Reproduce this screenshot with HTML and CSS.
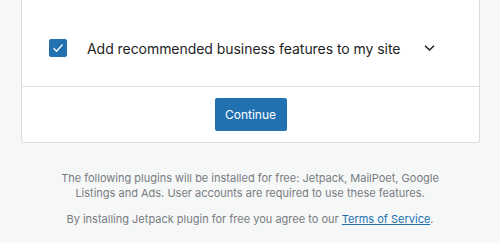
FILE: index.html
```html
<!DOCTYPE html>
<html lang="en">
<head>
    <meta charset="UTF-8">
    <meta name="viewport" content="width=device-width, initial-scale=1.0">
    <title>Business features</title>
    <link rel="stylesheet" href="styles.css">
</head>
<body>
    <div class="card">
        <div class="card-body">
            <label class="feature-row">
                <span class="checkbox">
                    <svg width="12" height="10" viewBox="0 0 12 10"><path d="M1.5 5.2 L4.6 8.2 L10.5 1.5" fill="none" stroke="#fff" stroke-width="1.3"/></svg>
                </span>
                <span class="feature-label">Add recommended business features to my site</span>
                <svg class="chevron" width="11" height="6" viewBox="0 0 11 6"><path d="M1 0.8 L5.5 5 L10 0.8" fill="none" stroke="#1e1e1e" stroke-width="1.5"/></svg>
            </label>
        </div>
        <div class="card-footer">
            <button class="continue-button">Continue</button>
        </div>
    </div>

    <div class="plugin-notice">
        <p>The following plugins will be installed for free: Jetpack, MailPoet, Google<br>Listings and Ads. User accounts are required to use these features.</p>
        <p>By installing Jetpack plugin for free you agree to our <a href="#">Terms of Service</a>.</p>
    </div>
</body>
</html>
```

FILE: styles.css
```css
body {
    margin: 0;
    background-color: #f6f7f7;
    font-family: "Inter", "Liberation Sans", sans-serif;
    color: #1e1e1e;
}
.card {
    width: 457px;
    margin: -10px 0 0 21px;
    background-color: #fff;
    border: 1px solid #dcdcde;
    border-top: none;
    border-radius: 0 0 3px 3px;
}
.card-body {
    padding: 49px 0 29px 27px;
    border-bottom: 1px solid #e0e0e0;
}
.feature-row {
    display: flex;
    align-items: center;
}
.checkbox {
    width: 18px;
    height: 18px;
    border-radius: 2px;
    background-color: #2271b1;
    display: flex;
    align-items: center;
    justify-content: center;
}
.feature-label {
    margin-left: 20px;
    font-size: 14px;
    letter-spacing: -0.05px;
}
.chevron {
    margin-left: 24px;
}
.card-footer {
    display: flex;
    justify-content: center;
    padding: 11px 0 11px;
}
.continue-button {
    background-color: #2271b1;
    color: #fff;
    border: none;
    border-radius: 2px;
    height: 33px;
    width: 72px;
    padding: 0;
    font-family: inherit;
    font-size: 12px;
}
.plugin-notice {
    width: 458px;
    margin-left: 21px;
    padding-top: 28px;
    text-align: center;
    font-size: 11px;
    line-height: 15px;
    color: #787c82;
}
.plugin-notice p {
    margin: 0 0 11px;
}
.plugin-notice a {
    color: #2271b1;
}
```
